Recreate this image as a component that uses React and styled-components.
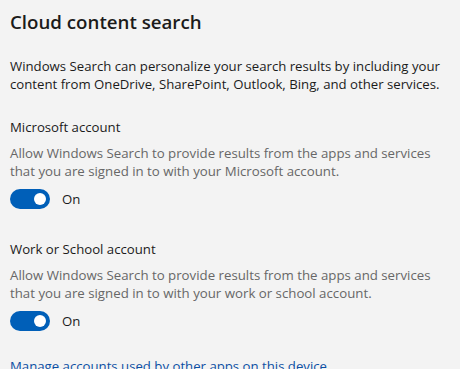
import React, { useState } from 'react'
import styled, { createGlobalStyle } from 'styled-components'

const GlobalStyle = createGlobalStyle`
  html, body {
    margin: 0;
    padding: 0;
    background: #f3f3f3;
  }
  body {
    font-family: "Open Sans", "Noto Sans", sans-serif;
    color: #1b1b1b;
  }
`

const Page = styled.div`
  width: 460px;
  height: 369px;
  overflow: hidden;
  padding: 9px 0 0 10px;
  box-sizing: border-box;
  display: flex;
  flex-direction: column;
`

const Title = styled.h1`
  margin: 0;
  font-size: 18.7px;
  font-weight: 600;
  line-height: 26px;
  color: #1b1b1b;
`

const Intro = styled.p`
  margin: 22px 0 0;
  font-size: 13.2px;
  line-height: 18px;
  color: #1b1b1b;
`

const Section = styled.section`
  margin-top: ${p => p.$top}px;
  display: flex;
  flex-direction: column;
`

const Label = styled.div`
  font-size: 13.2px;
  line-height: 18px;
  color: #1b1b1b;
`

const Desc = styled.div`
  margin-top: 8px;
  font-size: 13.25px;
  line-height: 18px;
  color: #676767;
`

const ToggleRow = styled.div`
  margin-top: 9px;
  display: flex;
  align-items: center;
  gap: 12px;
`

const Track = styled.button`
  width: 40px;
  height: 20px;
  border: none;
  border-radius: 10px;
  padding: 0 4px;
  box-sizing: border-box;
  display: flex;
  align-items: center;
  justify-content: ${p => (p.$on ? 'flex-end' : 'flex-start')};
  background: ${p => (p.$on ? '#005fb8' : 'transparent')};
  cursor: pointer;
`

const Knob = styled.span`
  width: 12px;
  height: 12px;
  border-radius: 50%;
  background: #fff;
`

const State = styled.span`
  font-size: 13.2px;
  line-height: 18px;
  color: #1b1b1b;
`

const Link = styled.a`
  margin-top: 26px;
  font-size: 13.2px;
  line-height: 18px;
  color: #0b4fa3;
  text-decoration: none;
  cursor: pointer;
`

const Toggle = ({ on, onChange }) => (
  <ToggleRow>
    <Track $on={on} onClick={onChange} aria-pressed={on}>
      <Knob />
    </Track>
    <State>{on ? 'On' : 'Off'}</State>
  </ToggleRow>
)

const App = () => {
  const [msa, setMsa] = useState(true)
  const [aad, setAad] = useState(true)

  return (
    <>
      <GlobalStyle />
      <Page>
        <Title>Cloud content search</Title>
        <Intro>
          Windows Search can personalize your search results by including your
          <br />
          content from OneDrive, SharePoint, Outlook, Bing, and other services.
        </Intro>

        <Section $top={25}>
          <Label>Microsoft account</Label>
          <Desc>
            Allow Windows Search to provide results from the apps and services
            <br />
            that you are signed in to with your Microsoft account.
          </Desc>
          <Toggle on={msa} onChange={() => setMsa(!msa)} />
        </Section>

        <Section $top={31}>
          <Label>Work or School account</Label>
          <Desc>
            Allow Windows Search to provide results from the apps and services
            <br />
            that you are signed in to with your work or school account.
          </Desc>
          <Toggle on={aad} onChange={() => setAad(!aad)} />
        </Section>

        <Link>Manage accounts used by other apps on this device</Link>
      </Page>
    </>
  )
}

export default App
